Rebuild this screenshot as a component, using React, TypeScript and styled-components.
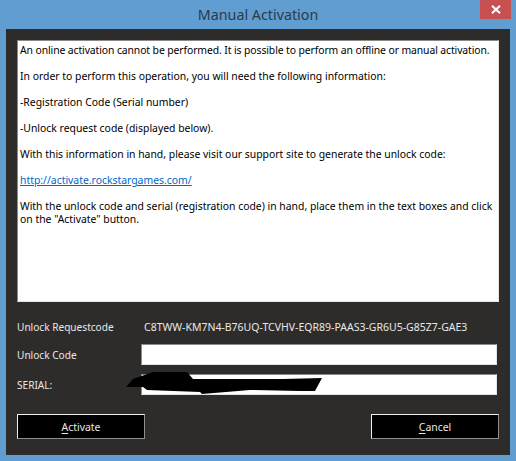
import React from 'react'
import styled, { createGlobalStyle } from 'styled-components'

const GlobalStyle = createGlobalStyle`
  html, body { margin: 0; padding: 0; background: #609dd0; }
  body { width: 516px; height: 461px; overflow: hidden; font-family: "Noto Sans", "Open Sans", sans-serif; }
`

const Win = styled.div`
  width: 516px;
  height: 461px;
  box-sizing: border-box;
  padding: 0 6px 6px;
  background: #609dd0;
  display: flex;
  flex-direction: column;
`
const TitleBar = styled.div`
  position: relative;
  height: 29px;
  flex: none;
  display: flex;
  justify-content: center;
  align-items: center;
  font-size: 14.3px;
  color: #2b3a4c;
  padding-bottom: 1px;
  box-sizing: border-box;
`
const CloseBtn = styled.button`
  position: absolute;
  top: 0;
  right: -1px;
  width: 31px;
  height: 19px;
  border: 0;
  padding: 0;
  background: #c75050;
  display: flex;
  align-items: center;
  justify-content: center;
`
const Panel = styled.div`
  flex: 1;
  background: #2d2c2b;
  padding: 11px 11px 16px;
  display: flex;
  flex-direction: column;
`
const MessageBox = styled.div`
  height: 262px;
  flex: none;
  box-sizing: border-box;
  background: #fff;
  border: 1px solid;
  border-color: #8a8a8a #e4e4e4 #e4e4e4 #8a8a8a;
  padding: 3px 2px;
  font-size: 10.4px;
  line-height: 13px;
  color: #000;
`
const Para = styled.p<{ $tight?: boolean }>`
  margin: 0 0 13px;
  letter-spacing: ${p => (p.$tight ? '-0.1px' : 'normal')};
`
const SupportLink = styled.a`
  color: #0066cc;
  text-decoration: underline;
`
const Fields = styled.div`
  margin-top: 17px;
  display: flex;
  flex-direction: column;
  gap: 9px;
  font-size: 10.1px;
  color: #e8e8e8;
`
const Row = styled.div<{ $h: number }>`
  height: ${p => p.$h}px;
  display: grid;
  grid-template-columns: 124px 356px;
  align-items: center;
`
const FieldLabel = styled.span<{ $drop?: boolean }>`
  padding-top: ${p => (p.$drop ? 1 : 0)}px;
`
const CodeText = styled.span`
  padding-left: 3px;
  white-space: nowrap;
  font-size: 10.5px;
`
const FieldBox = styled.div`
  position: relative;
  height: 21px;
  box-sizing: border-box;
  background: #fff;
  border: 1px solid;
  border-color: #8a8a8a #e4e4e4 #e4e4e4 #8a8a8a;
`
const Redaction = styled.svg`
  position: absolute;
  left: -16px;
  top: -4px;
`
const Buttons = styled.div`
  margin-top: 19px;
  display: flex;
  justify-content: space-between;
`
const Btn = styled.button`
  width: 128px;
  height: 25px;
  box-sizing: border-box;
  background: #000;
  color: #e8e8e8;
  border: 1px solid;
  border-color: #f0f0f0 #8f8f8f #8f8f8f #f0f0f0;
  padding: 0;
  font-family: inherit;
  font-size: 10.4px;
  u { text-underline-offset: 2px; }
`

export default function App() {
  return (
    <Win>
      <GlobalStyle />
      <TitleBar>
        Manual Activation
        <CloseBtn aria-label="Close">
          <svg width="10" height="9" viewBox="0 0 10 9">
            <path d="M1 0.8 L9 8.2 M9 0.8 L1 8.2" stroke="#fff" strokeWidth="2.2" />
          </svg>
        </CloseBtn>
      </TitleBar>
      <Panel>
        <MessageBox>
          <Para $tight>An online activation cannot be performed. It is possible to perform an offline or manual activation.</Para>
          <Para>In order to perform this operation, you will need the following information:</Para>
          <Para>-Registration Code (Serial number)</Para>
          <Para>-Unlock request code (displayed below).</Para>
          <Para>With this information in hand, please visit our support site to generate the unlock code:</Para>
          <Para><SupportLink href="#">http://activate.rockstargames.com/</SupportLink></Para>
          <Para>With the unlock code and serial (registration code) in hand, place them in the text boxes and click on the "Activate" button.</Para>
        </MessageBox>
        <Fields>
          <Row $h={16}>
            <FieldLabel>Unlock Requestcode</FieldLabel>
            <CodeText>C8TWW-KM7N4-B76UQ-TCVHV-EQR89-PAAS3-GR6U5-G85Z7-GAE3</CodeText>
          </Row>
          <Row $h={21}>
            <FieldLabel $drop>Unlock Code</FieldLabel>
            <FieldBox />
          </Row>
          <Row $h={21}>
            <FieldLabel $drop>SERIAL:</FieldLabel>
            <FieldBox>
              <Redaction width="200" height="26" viewBox="0 0 200 26">
                <path
                  d="M0 16 L7 8 L27 1 L61 1 L67 8 L157 8 L196 7 L189 20 L174 20 L124 19 L76 23 L74 21 L21 19 L17 16 Z"
                  fill="#000"
                />
              </Redaction>
            </FieldBox>
          </Row>
        </Fields>
        <Buttons>
          <Btn><u>A</u>ctivate</Btn>
          <Btn><u>C</u>ancel</Btn>
        </Buttons>
      </Panel>
    </Win>
  )
}
